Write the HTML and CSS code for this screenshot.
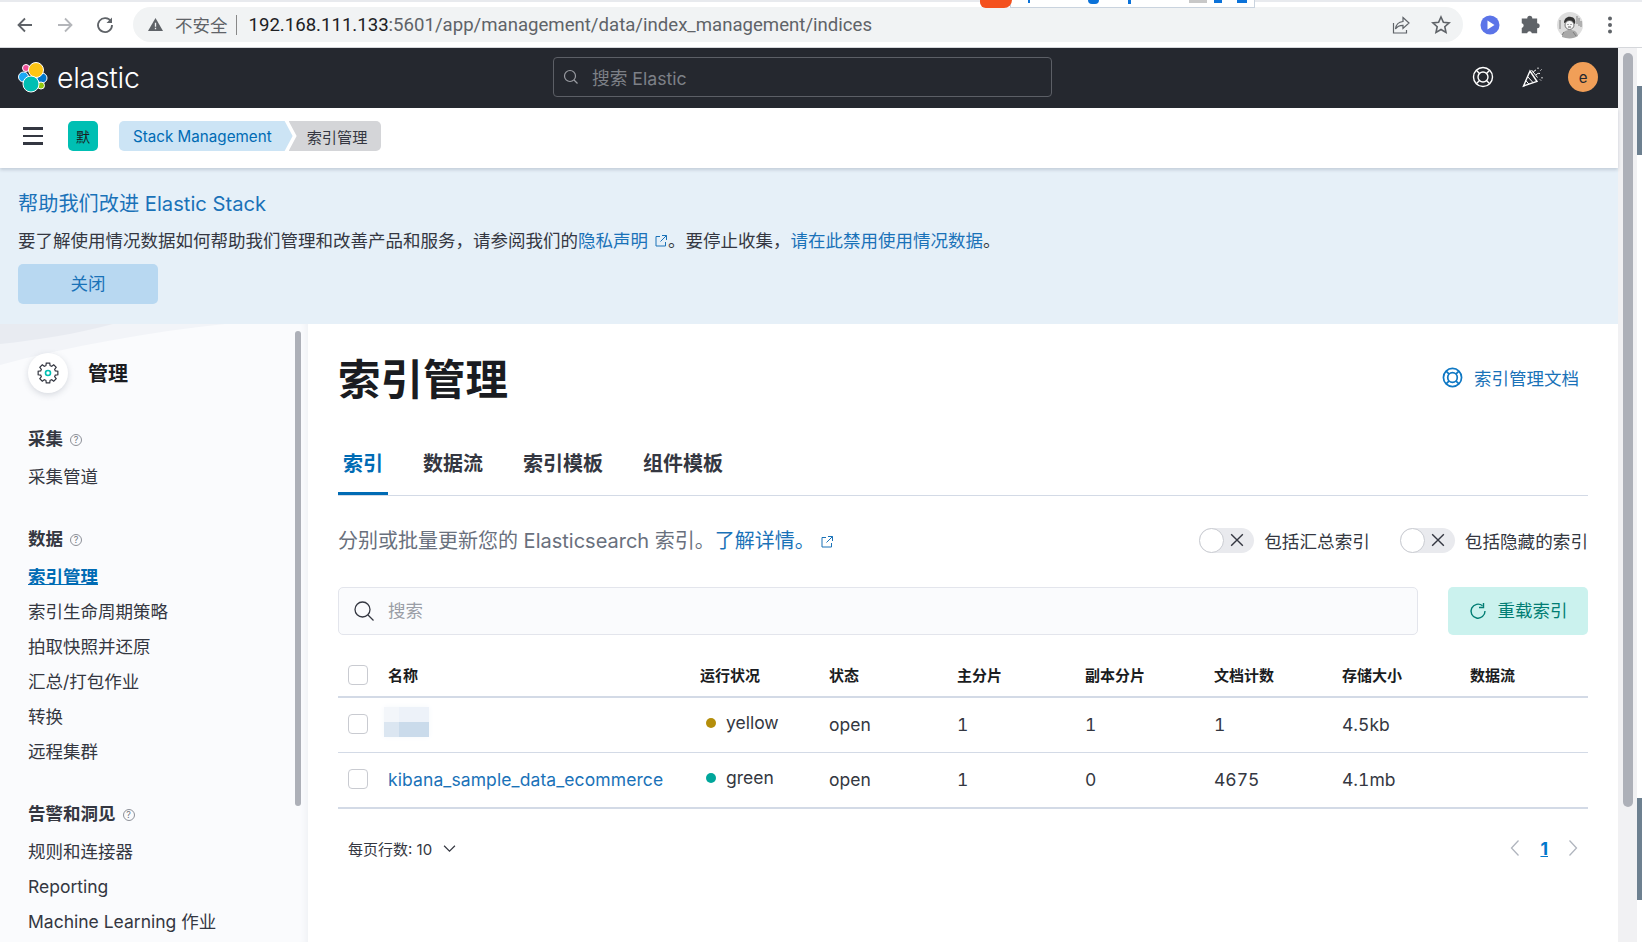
FILE: index.html
```html
<!DOCTYPE html>
<html lang="zh-CN">
<head>
  <meta charset="UTF-8">
  <meta name="viewport" content="width=device-width, initial-scale=1.0">
  <title>索引管理 - Elastic</title>
  <link rel="stylesheet" href="styles.css">
</head>
<body>
  <!-- Browser toolbar -->
  <div class="toolbar">
    <div class="stray-window">
      <span class="stray-logo"></span>
      <span class="stray-bit b1"></span><span class="stray-bit b2"></span><span class="stray-bit b3"></span>
      <span class="stray-bit b4"></span><span class="stray-bit b5"></span><span class="stray-bit b6"></span>
    </div>
    <span class="tool-btn">
      <svg viewBox="0 0 20 20" width="20" height="20"><path d="M17 10H4M10 3.5 3.5 10l6.5 6.5" class="tool-stroke"/></svg>
    </span>
    <span class="tool-btn">
      <svg viewBox="0 0 20 20" width="20" height="20"><path d="M3 10h13M10 3.5l6.500 6.500-6.500 6.500" class="tool-stroke faded"/></svg>
    </span>
    <span class="tool-btn">
      <svg viewBox="0 0 20 20" width="20" height="20"><path d="M16 6.500A7 7 0 1 0 17 10" class="tool-stroke"/><path d="M17 2.500V8h-5.500z" fill="#5f6368"/></svg>
    </span>
    <div class="url-pill">
      <svg class="warn-icon" viewBox="0 0 18 16" width="17" height="15"><path d="M9 1 17 15H1z" fill="#5f6368"/><path d="M8.300 6h1.400v4.500H8.300zM8.300 11.500h1.400V13H8.300z" fill="#f1f3f4"/></svg>
      <span class="insecure">不安全</span>
      <span class="url-sep"></span>
      <span class="url"><span class="url-host">192.168.111.133</span>:5601/app/management/data/index_management/indices</span>
      <span class="pill-icons">
        <svg viewBox="0 0 20 20" width="20" height="20"><path d="M12 2.500 18 8l-6 5.500V10.300c-3.500 0-5.800 1-7.500 3.700.4-4.200 3-7 7.500-7.500z" class="tool-thin"/><path d="M2.500 8v10h13v-3" class="tool-thin"/></svg>
        <svg viewBox="0 0 20 20" width="20" height="20"><path d="m10 2 2.400 5.300 5.700.6-4.300 3.800 1.200 5.700-5-2.900-5 2.900 1.200-5.700L1.900 7.900l5.700-.6z" class="tool-stroke star"/></svg>
      </span>
    </div>
    <div class="tool-end">
      <span class="tool-btn">
        <svg viewBox="0 0 20 20" width="20" height="20"><circle cx="10" cy="10" r="9.500" fill="#5b74e8"/><path d="M7.500 5.500 14.500 10l-7 4.500z" fill="#fff"/></svg>
      </span>
      <span class="tool-btn">
        <svg viewBox="0 0 20 20" width="22" height="22"><path d="M7.500 4a2.300 2.300 0 0 1 4.600 0h4.400v4.400a2.300 2.300 0 0 1 0 4.600v4.500h-4.800a2.200 2.200 0 0 0-4.300 0H2.500v-4.800a2.200 2.200 0 0 0 0-4.300V4z" fill="#5f6368"/></svg>
      </span>
      <span class="tool-btn">
        <svg viewBox="0 0 26 26" width="26" height="28">
          <circle cx="13" cy="13" r="13" fill="#dedede"/>
          <path d="M7 11c0-5 4-7 7-6 3 0 5 3 4 7-3-2-7-3-11-1z" fill="#333"/>
          <circle cx="12.500" cy="13" r="4.500" fill="#f6f6f6" stroke="#555" stroke-width=".8"/>
          <path d="M10.500 12.500h1M13.500 12.500h1M11 15h3" stroke="#333" stroke-width=".8" fill="none"/>
          <path d="M5 25c0-5 3-7 8-7s7 2 8 6c-4 3-11 3-16 1z" fill="#a8a8a8"/>
          <path d="M20 4v8M22 6v8M24 9v6M3 8v9M7 20l-2 3M16 20l3 4" stroke="#777" stroke-width=".9" fill="none"/>
        </svg>
      </span>
      <span class="tool-btn">
        <svg viewBox="0 0 6 20" width="6" height="20"><circle cx="3" cy="3.500" r="2" fill="#5f6368"/><circle cx="3" cy="10" r="2" fill="#5f6368"/><circle cx="3" cy="16.500" r="2" fill="#5f6368"/></svg>
      </span>
    </div>
  </div>

  <div class="window-body">
    <div class="app">
      <!-- Kibana header -->
      <header class="top-header">
        <div class="brand">
          <svg class="brand-logo" viewBox="15 60 34 34" width="34" height="34">
            <g stroke="#fff" stroke-width="1">
              <circle cx="26" cy="68" r="3.500" fill="#f04e98"/>
              <circle cx="42" cy="78" r="5" fill="#0077cc"/>
              <circle cx="41" cy="85.500" r="3.500" fill="#93c90e"/>
              <circle cx="23.500" cy="77" r="5" fill="#1ba9f5"/>
              <circle cx="36" cy="70" r="7.500" fill="#fec514"/>
              <circle cx="31" cy="84" r="8" fill="#00bfb3"/>
            </g>
          </svg>
          <span class="brand-name">elastic</span>
        </div>
        <div class="global-search">
          <svg viewBox="0 0 16 16" width="16" height="16"><circle cx="7" cy="7" r="5.500" class="search-stroke"/><path d="m11 11 3.500 3.500" class="search-stroke"/></svg>
          <span>搜索 Elastic</span>
        </div>
        <div class="header-icons">
          <span class="header-btn">
            <svg viewBox="0 0 22 22" width="22" height="22"><circle cx="11" cy="11" r="9.500" class="ring-stroke"/><circle cx="11" cy="11" r="5" class="ring-stroke"/><path d="m4.300 4.300 3.200 3.200M17.700 4.300l-3.200 3.200M4.300 17.700l3.200-3.200M17.700 17.700l-3.200-3.200" class="ring-stroke"/></svg>
          </span>
          <span class="header-btn">
            <svg viewBox="0 0 22 22" width="22" height="22"><path d="M8 5 1.500 20l13.500-4.500z" class="ring-stroke"/><path d="M5.500 10.500l5.500 6M3.800 14.500l3 3.500M9.500 4l6 7.500" class="ring-stroke thin"/><path d="M11 7c.5-1.500 1.500-2.500 3-3M14 9c1-1.500 2.500-2 4-1.500M16 1.500v1.500M19.500 3.500l-1 1M20 11v1.500M18 13.500l1 1" class="ring-stroke thin"/></svg>
          </span>
          <span class="header-btn"><span class="avatar">e</span></span>
        </div>
      </header>

      <!-- Nav / breadcrumbs -->
      <nav class="crumb-bar">
        <span class="burger"><i></i><i></i><i></i></span>
        <span class="space-badge">默</span>
        <div class="crumbs">
          <a class="crumb crumb-link">Stack Management</a>
          <span class="crumb crumb-current">索引管理</span>
        </div>
      </nav>

      <!-- Telemetry notice -->
      <section class="notice">
        <h2>帮助我们改进 Elastic Stack</h2>
        <p>要了解使用情况数据如何帮助我们管理和改善产品和服务，请参阅我们的<a>隐私声明<svg class="ext-icon" viewBox="0 0 14 14" width="14" height="14"><path d="M6 2.500H2v9.500h9.500V8M8 1.500h4.500V6M12.500 1.500 6.500 7.500" class="ext-stroke"/></svg></a>。要停止收集，<a>请在此禁用使用情况数据</a>。</p>
        <button class="notice-close">关闭</button>
      </section>

      <div class="mgmt">
        <!-- Side nav -->
        <aside class="sidebar">
          <svg class="side-bg" viewBox="0 0 230 45" width="230" height="45">
            <path d="M0 0h225C150 8 70 22 0 41z" fill="#f2f4f8"/>
            <path d="M0 0h113C76 10 38 16 0 20z" fill="#e8ebf1"/>
          </svg>
          <div class="side-nav">
            <div class="side-head">
              <span class="gear-disc">
                <svg viewBox="0 0 24 24" width="24" height="24">
                  <polygon points="19.30,9.91 21.85,10.26 21.85,13.74 19.30,14.09 18.65,15.68 20.19,17.74 17.74,20.19 15.68,18.65 14.09,19.30 13.74,21.85 10.26,21.85 9.91,19.30 8.32,18.65 6.26,20.19 3.81,17.74 5.35,15.68 4.70,14.09 2.15,13.74 2.15,10.26 4.70,9.91 5.35,8.32 3.81,6.26 6.26,3.81 8.32,5.35 9.91,4.70 10.26,2.15 13.74,2.15 14.09,4.70 15.68,5.35 17.74,3.81 20.19,6.26 18.65,8.32" fill="none" stroke="#343741" stroke-width="1.200"/>
                  <circle cx="12" cy="12" r="2.500" fill="none" stroke="#00bfb3" stroke-width="1.600"/>
                </svg>
              </span>
              <span class="side-title">管理</span>
            </div>
            <div class="side-group">
              <h3>采集 <span class="help">?</span></h3>
              <a>采集管道</a>
            </div>
            <div class="side-group">
              <h3>数据 <span class="help">?</span></h3>
              <a class="active">索引管理</a>
              <a>索引生命周期策略</a>
              <a>拍取快照并还原</a>
              <a>汇总/打包作业</a>
              <a>转换</a>
              <a>远程集群</a>
            </div>
            <div class="side-group">
              <h3>告警和洞见 <span class="help">?</span></h3>
              <a>规则和连接器</a>
              <a>Reporting</a>
              <a>Machine Learning 作业</a>
            </div>
          </div>
          <div class="side-thumb"></div>
        </aside>

        <main class="content">
          <div class="title-row">
            <h1>索引管理</h1>
            <a class="doc-link">
              <svg viewBox="0 0 22 22" width="21" height="21"><circle cx="11" cy="11" r="9.500" class="doc-stroke"/><circle cx="11" cy="11" r="5" class="doc-stroke"/><path d="m4.300 4.300 3.200 3.200M17.700 4.300l-3.200 3.200M4.300 17.700l3.200-3.200M17.700 17.700l-3.200-3.200" class="doc-stroke"/></svg>
              索引管理文档
            </a>
          </div>

          <div class="tabs">
            <a class="tab active">索引</a>
            <a class="tab">数据流</a>
            <a class="tab">索引模板</a>
            <a class="tab">组件模板</a>
          </div>

          <div class="desc-row">
            <p class="desc">分别或批量更新您的 Elasticsearch 索引。<a>了解详情。<svg class="ext-icon" viewBox="0 0 14 14" width="14" height="14"><path d="M6 2.500H2v9.500h9.500V8M8 1.500h4.500V6M12.500 1.500 6.500 7.500" class="ext-stroke"/></svg></a></p>
            <div class="toggles">
              <label class="toggle">
                <span class="switch"><span class="knob"></span><svg viewBox="0 0 12 12" width="14" height="14"><path d="m1 1 10 10M11 1 1 11" class="x-stroke"/></svg></span>
                包括汇总索引
              </label>
              <label class="toggle">
                <span class="switch"><span class="knob"></span><svg viewBox="0 0 12 12" width="14" height="14"><path d="m1 1 10 10M11 1 1 11" class="x-stroke"/></svg></span>
                包括隐藏的索引
              </label>
            </div>
          </div>

          <div class="search-row">
            <div class="search-box">
              <svg viewBox="0 0 22 22" width="22" height="22"><circle cx="9.500" cy="9.500" r="7.500" class="lens"/><path d="m15 15 5.500 5.500" class="lens"/></svg>
              <span>搜索</span>
            </div>
            <button class="reload-btn">
              <svg viewBox="0 0 18 18" width="18" height="18"><path d="M13.500 3.800A7 7 0 1 0 16 9" class="reload-stroke"/><path d="M14.500 1v4.500H10" class="reload-stroke"/></svg>
              <span>重载索引</span>
            </button>
          </div>

          <table class="indices">
            <colgroup>
              <col class="col-check"><col class="col-name"><col class="col-a"><col class="col-b"><col class="col-b">
              <col class="col-a"><col class="col-b"><col class="col-b"><col class="col-last">
            </colgroup>
            <thead>
              <tr>
                <th class="check-cell"><span class="check"></span></th>
                <th>名称</th><th>运行状况</th><th>状态</th><th>主分片</th><th>副本分片</th><th>文档计数</th><th>存储大小</th><th>数据流</th>
              </tr>
            </thead>
            <tbody>
              <tr class="row-first">
                <td class="check-cell"><span class="check"></span></td>
                <td class="name-cell"><span class="smudge"></span></td>
                <td><span class="health"><i class="dot yellow"></i>yellow</span></td>
                <td>open</td><td>1</td><td>1</td><td>1</td><td>4.5kb</td><td></td>
              </tr>
              <tr class="row-last">
                <td class="check-cell"><span class="check"></span></td>
                <td><a class="index-link">kibana_sample_data_ecommerce</a></td>
                <td><span class="health"><i class="dot green"></i>green</span></td>
                <td>open</td><td>1</td><td>0</td><td>4675</td><td>4.1mb</td><td></td>
              </tr>
            </tbody>
          </table>

          <div class="pager-row">
            <span class="per-page">每页行数: 10
              <svg viewBox="0 0 12 12" width="13" height="13"><path d="m1 3.500 5 5 5-5" class="chev"/></svg>
            </span>
            <div class="pager">
              <svg viewBox="0 0 10 18" width="10" height="18"><path d="M8.500 1.500 1.500 9l7 7.500" class="pager-chev"/></svg>
              <a class="page-num">1</a>
              <svg viewBox="0 0 10 18" width="10" height="18"><path d="m1.500 1.500 7 7.500-7 7.500" class="pager-chev"/></svg>
            </div>
          </div>
        </main>
      </div>
    </div>

    <div class="page-track"><div class="page-thumb"></div></div>
    <div class="desktop-edge"></div>
  </div>
</body>
</html>
```

FILE: styles.css
```css
* { box-sizing: border-box; }

body {
  margin: 0;
  width: 1642px;
  height: 942px;
  overflow: hidden;
  background: #fff;
  color: #343741;
  font-family: Inter, "Noto Sans CJK SC", sans-serif;
  font-size: 17.5px;
}

a { color: inherit; text-decoration: none; }
h1, h2, h3, p { margin: 0; }

/* Browser toolbar */
.toolbar {
  position: relative;
  display: flex;
  align-items: center;
  height: 48px;
  padding-left: 5px;
  background: #fff;
  border-top: 2px solid #e8eaee;
  border-bottom: 1px solid #d5d7db;
}
.tool-btn {
  display: flex;
  flex: none;
  align-items: center;
  justify-content: center;
  width: 40px;
}
.tool-stroke { fill: none; stroke: #5f6368; stroke-width: 1.8; }
.tool-stroke.faded { stroke: #b4b6ba; }
.tool-stroke.star { stroke-width: 1.6; }
.tool-thin { fill: none; stroke: #5f6368; stroke-width: 1.2; }

.url-pill {
  display: flex;
  align-items: center;
  width: 1330px;
  height: 35px;
  margin-left: 8px;
  padding: 0 12px 0 14px;
  border-radius: 18px;
  background: #f1f3f4;
  font-family: Roboto, "Noto Sans CJK SC", sans-serif;
  color: #5f6368;
}
.warn-icon { flex: none; }
.insecure { margin-left: 11px; font-size: 17.5px; }
.url-sep { width: 1px; height: 20px; margin: 0 12px 0 8px; background: #888; }
.url { font-size: 18.6px; white-space: nowrap; }
.url-host { color: #202124; }
.pill-icons { display: flex; gap: 20px; margin-left: auto; }

.tool-end { display: flex; margin-left: 7px; }

/* window edge that pokes in over the tab strip */
.stray-window {
  position: absolute;
  top: -2px;
  left: 1010px;
  width: 245px;
  height: 8px;
  background: #fff;
  border: 1px solid #c9d3de;
  border-top: 0;
}
.stray-logo {
  position: absolute;
  left: -31px;
  top: 0;
  width: 32px;
  height: 8px;
  border-radius: 0 0 14px 10px;
  background: #f4511e;
}
.stray-bit { position: absolute; top: 0; height: 3px; background: #0b72d9; }
.b1 { left: 17px; width: 2px; }
.b2 { left: 77px; width: 11px; height: 4px; border-radius: 0 0 6px 6px; }
.b3 { left: 117px; width: 3px; height: 4px; }
.b4 { left: 178px; width: 18px; background: #c8c8c8; }
.b5 { left: 203px; width: 8px; }
.b6 { left: 226px; width: 10px; }

.window-body { display: flex; height: 894px; }
.app { display: flex; flex-direction: column; width: 1618px; }

/* Kibana header */
.top-header {
  display: flex;
  flex: none;
  align-items: center;
  height: 60px;
  padding-bottom: 2px;
  background: #25282f;
}
.brand {
  display: flex;
  align-items: center;
  gap: 8px;
  width: 553px;
  padding-left: 15px;
}
.brand-name { color: #fff; font-size: 28.5px; font-weight: 300; letter-spacing: -.3px; }
.global-search {
  display: flex;
  align-items: center;
  gap: 13px;
  width: 499px;
  height: 40px;
  padding-left: 9px;
  border: 1px solid #5c5f66;
  border-radius: 4px;
  color: #7d8087;
  font-size: 17.7px;
}
.search-stroke { fill: none; stroke: #9a9ca2; stroke-width: 1.2; }
.header-icons { display: flex; margin-left: auto; padding-right: 10px; }
.header-btn { display: flex; align-items: center; justify-content: center; width: 50px; }
.ring-stroke { fill: none; stroke: #fff; stroke-width: 1.4; }
.ring-stroke.thin { stroke-width: 1; }
.avatar {
  display: flex;
  align-items: center;
  justify-content: center;
  width: 30px;
  height: 30px;
  border-radius: 50%;
  background: #f19f58;
  color: #25282f;
  font-size: 15px;
}

/* Breadcrumbs */
.crumb-bar {
  position: relative;
  z-index: 2;
  display: flex;
  flex: none;
  align-items: center;
  height: 60px;
  padding: 0 0 4px 23px;
  background: #fff;
  box-shadow: 0 2px 3px rgba(120, 130, 150, .3);
}
.burger { display: flex; flex-direction: column; gap: 5px; width: 20px; }
.burger i { height: 2.500px; background: #343741; }
.space-badge {
  display: flex;
  align-items: center;
  justify-content: center;
  width: 30px;
  height: 30px;
  margin-left: 25px;
  border-radius: 5px;
  background: #00bfb3;
  color: #1a1c21;
  font-size: 14px;
}
.crumbs { display: flex; margin-left: 21px; border-radius: 5px; overflow: hidden; }
.crumb { display: flex; align-items: center; height: 30px; font-size: 15.2px; }
.crumb-link {
  padding: 0 21px 0 14px;
  background: #cce4f5;
  color: #006bb4;
  clip-path: polygon(0 0, calc(100% - 8px) 0, 100% 50%, calc(100% - 8px) 100%, 0 100%);
}
.crumb-current {
  margin-left: -4px;
  padding: 0 14px 0 18px;
  background: #d4d5d8;
  clip-path: polygon(0 0, 100% 0, 100% 100%, 0 100%, 8px 50%);
}

/* Notice */
.notice {
  flex: none;
  height: 156px;
  padding: 21px 18px 0;
  background: #e6f0f8;
}
.notice h2 { color: #1a72b8; font-size: 20.2px; font-weight: 400; line-height: 30px; }
.notice p { margin-top: 9px; line-height: 26px; color: #343741; }
.notice a { color: #1a72b8; }
.ext-icon { margin-left: 6px; vertical-align: -1px; }
.ext-stroke { fill: none; stroke: #1a72b8; stroke-width: 1; }
.notice-close {
  display: block;
  width: 140px;
  height: 40px;
  margin-top: 10px;
  padding: 0 0 4px;
  border: 0;
  border-radius: 5px;
  background: #b8d8f1;
  color: #1a72b8;
  font: inherit;
}

.mgmt { display: flex; flex: 1; min-height: 0; }

/* Side nav */
.sidebar {
  position: relative;
  display: flex;
  flex: none;
  width: 308px;
  background: #fafbfd;
  box-shadow: inset -7px 0 6px -5px #eef0f4;
}
.side-bg { position: absolute; top: 0; left: 0; }
.side-nav { position: relative; width: 295px; padding: 29px 0 0 28px; }
.side-head { display: flex; align-items: center; gap: 20px; height: 40px; }
.gear-disc {
  display: flex;
  align-items: center;
  justify-content: center;
  width: 40px;
  height: 40px;
  border-radius: 50%;
  background: #fff;
  box-shadow: 0 2px 6px rgba(90, 100, 120, .22);
}
.side-title { padding-bottom: 2px; font-size: 20px; font-weight: 700; color: #1a1c21; }
.side-group { margin-top: 33px; }
.side-head + .side-group { margin-top: 34px; }
.side-group h3 {
  height: 24px;
  margin-bottom: 8px;
  font-size: 17.5px;
  font-weight: 700;
  line-height: 24px;
  color: #343741;
}
.help {
  display: inline-flex;
  align-items: center;
  justify-content: center;
  width: 12px;
  height: 12px;
  margin-left: 3px;
  border: 1px solid #8d9098;
  border-radius: 50%;
  color: #74777f;
  font-size: 9px;
  font-weight: 400;
  vertical-align: 2px;
}
.side-group a { display: block; height: 35px; line-height: 35px; white-space: nowrap; }
.side-group a.active { color: #006bb4; font-weight: 700; text-decoration: underline; }
.side-thumb {
  position: relative;
  width: 6px;
  height: 475px;
  margin-top: 7px;
  border-radius: 3px;
  background: #adb0b8;
}

/* Main panel */
.content { flex: 1; padding: 30px 31px 0 30px; background: #fff; }
.title-row { display: flex; align-items: center; justify-content: space-between; height: 52px; }
h1 { font-size: 42.5px; font-weight: 700; line-height: 52px; color: #1a1c21; }
.doc-link {
  display: flex;
  align-items: center;
  gap: 11px;
  margin: -6px 9px 0 0;
  color: #1a72b8;
}
.doc-stroke { fill: none; stroke: #0f78c4; stroke-width: 1.8; }

.tabs {
  display: flex;
  gap: 30px;
  height: 63px;
  margin-top: 27px;
  border-bottom: 1px solid #d3dae6;
}
.tab {
  display: flex;
  align-items: center;
  height: 62px;
  padding: 0 5px 0;
  border-bottom: 3px solid transparent;
  color: #343741;
  font-size: 20px;
  font-weight: 700;
}
.tab.active { border-bottom-color: #006bb4; color: #006bb4; }

.desc-row { display: flex; align-items: center; justify-content: space-between; height: 25px; margin-top: 32px; }
.desc { padding-bottom: 2px; color: #69707d; font-size: 20px; }
.desc a { color: #1a72b8; }
.desc .ext-icon { margin-left: 5px; }
.toggles { display: flex; gap: 30px; }
.toggle { display: flex; align-items: center; gap: 10px; padding-bottom: 1px; font-size: 17.6px; }
.switch {
  display: flex;
  align-items: center;
  justify-content: flex-end;
  position: relative;
  width: 55px;
  height: 25px;
  padding-right: 10px;
  border-radius: 13px;
  background: #e9eaee;
}
.knob {
  position: absolute;
  left: 0;
  top: 0;
  width: 25px;
  height: 25px;
  border: 1px solid #c9cbd1;
  border-radius: 50%;
  background: #fff;
}
.x-stroke { fill: none; stroke: #343741; stroke-width: 1.2; }

.search-row { display: flex; gap: 30px; height: 48px; margin-top: 34px; }
.search-box {
  display: flex;
  flex: 1;
  align-items: center;
  gap: 13px;
  padding-left: 14px;
  border: 1px solid #e3e5ec;
  border-radius: 5px;
  background: #fafbfd;
  color: #9a9ea6;
}
.search-box span, .reload-btn span { padding-bottom: 3px; }
.lens { fill: none; stroke: #343741; stroke-width: 1.3; }
.reload-btn {
  display: flex;
  align-items: center;
  justify-content: center;
  gap: 11px;
  width: 140px;
  border: 0;
  border-radius: 5px;
  background: #cbf2ee;
  color: #017d73;
  font: inherit;
}
.reload-stroke { fill: none; stroke: #017d73; stroke-width: 1.4; }

/* Table */
.indices {
  width: 100%;
  margin-top: 20px;
  border-collapse: separate;
  border-spacing: 0;
  table-layout: fixed;
}
.col-check { width: 45px; }
.col-name { width: 312px; }
.col-a { width: 129px; }
.col-b { width: 128px; }
.col-last { width: 123px; }
th, td { padding: 0 5px; text-align: left; white-space: nowrap; }
th {
  height: 43px;
  padding-bottom: 2px;
  border-bottom: 2px solid #d3dae6;
  color: #1a1c21;
  font-size: 15px;
  font-weight: 700;
}
td {
  height: 54px;
  padding-bottom: 2px;
  border-bottom: 1px solid #d3dae6;
  font-variant-numeric: tabular-nums;
}
.row-first td { height: 55px; }
.row-last td { height: 56px; border-bottom-width: 2px; }
.check-cell { padding-left: 10px; }
.check {
  display: block;
  width: 20px;
  height: 20px;
  border: 1px solid #c9cbd1;
  border-radius: 4px;
  background: #fff;
}
.name-cell { padding-left: 1px; }
.smudge {
  display: block;
  width: 45px;
  height: 30px;
  margin-top: -4px;
  box-shadow: 0 0 6px #f4f7fb;
  background:
    linear-gradient(to right, #dbe6f1 15px, #cadbeb 15px) left bottom / 100% 15px no-repeat,
    linear-gradient(to right, #f3f6fa 15px, #edf2f9 15px) left top / 100% 15px no-repeat;
}
.index-link { color: #1a72b8; letter-spacing: .1px; }
.health { display: flex; align-items: center; gap: 10px; padding: 0 0 3px 6px; }
.dot { width: 10px; height: 10px; border-radius: 50%; }
.dot.yellow { background: #b48e0b; }
.dot.green { background: #00a69b; }

.pager-row { display: flex; align-items: center; justify-content: space-between; height: 30px; margin-top: 24px; padding: 0 10px; }
.per-page { display: flex; align-items: center; gap: 11px; font-size: 15px; }
.chev { fill: none; stroke: #343741; stroke-width: 1.1; }
.pager { display: flex; align-items: center; gap: 20px; }
.pager-chev { fill: none; stroke: #b0b5be; stroke-width: 1.300; }
.page-num { color: #0077cc; font-size: 17.5px; font-weight: 700; text-decoration: underline; }

/* Page scrollbar + edge of whatever is behind the window */
.page-track { flex: none; width: 19px; padding: 5px 5px 0; background: #f1f1f3; }
.page-thumb { width: 10px; height: 754px; border-radius: 5px; background: #adb0b8; }
.desktop-edge {
  flex: none;
  width: 5px;
  background: linear-gradient(to bottom, #fff 0, #fff 38px, #6d8090 38px, #6d8090 107px, #fff 107px, #fff 750px, #6d8090 750px, #6d8090 852px, #fff 852px);
}
```
